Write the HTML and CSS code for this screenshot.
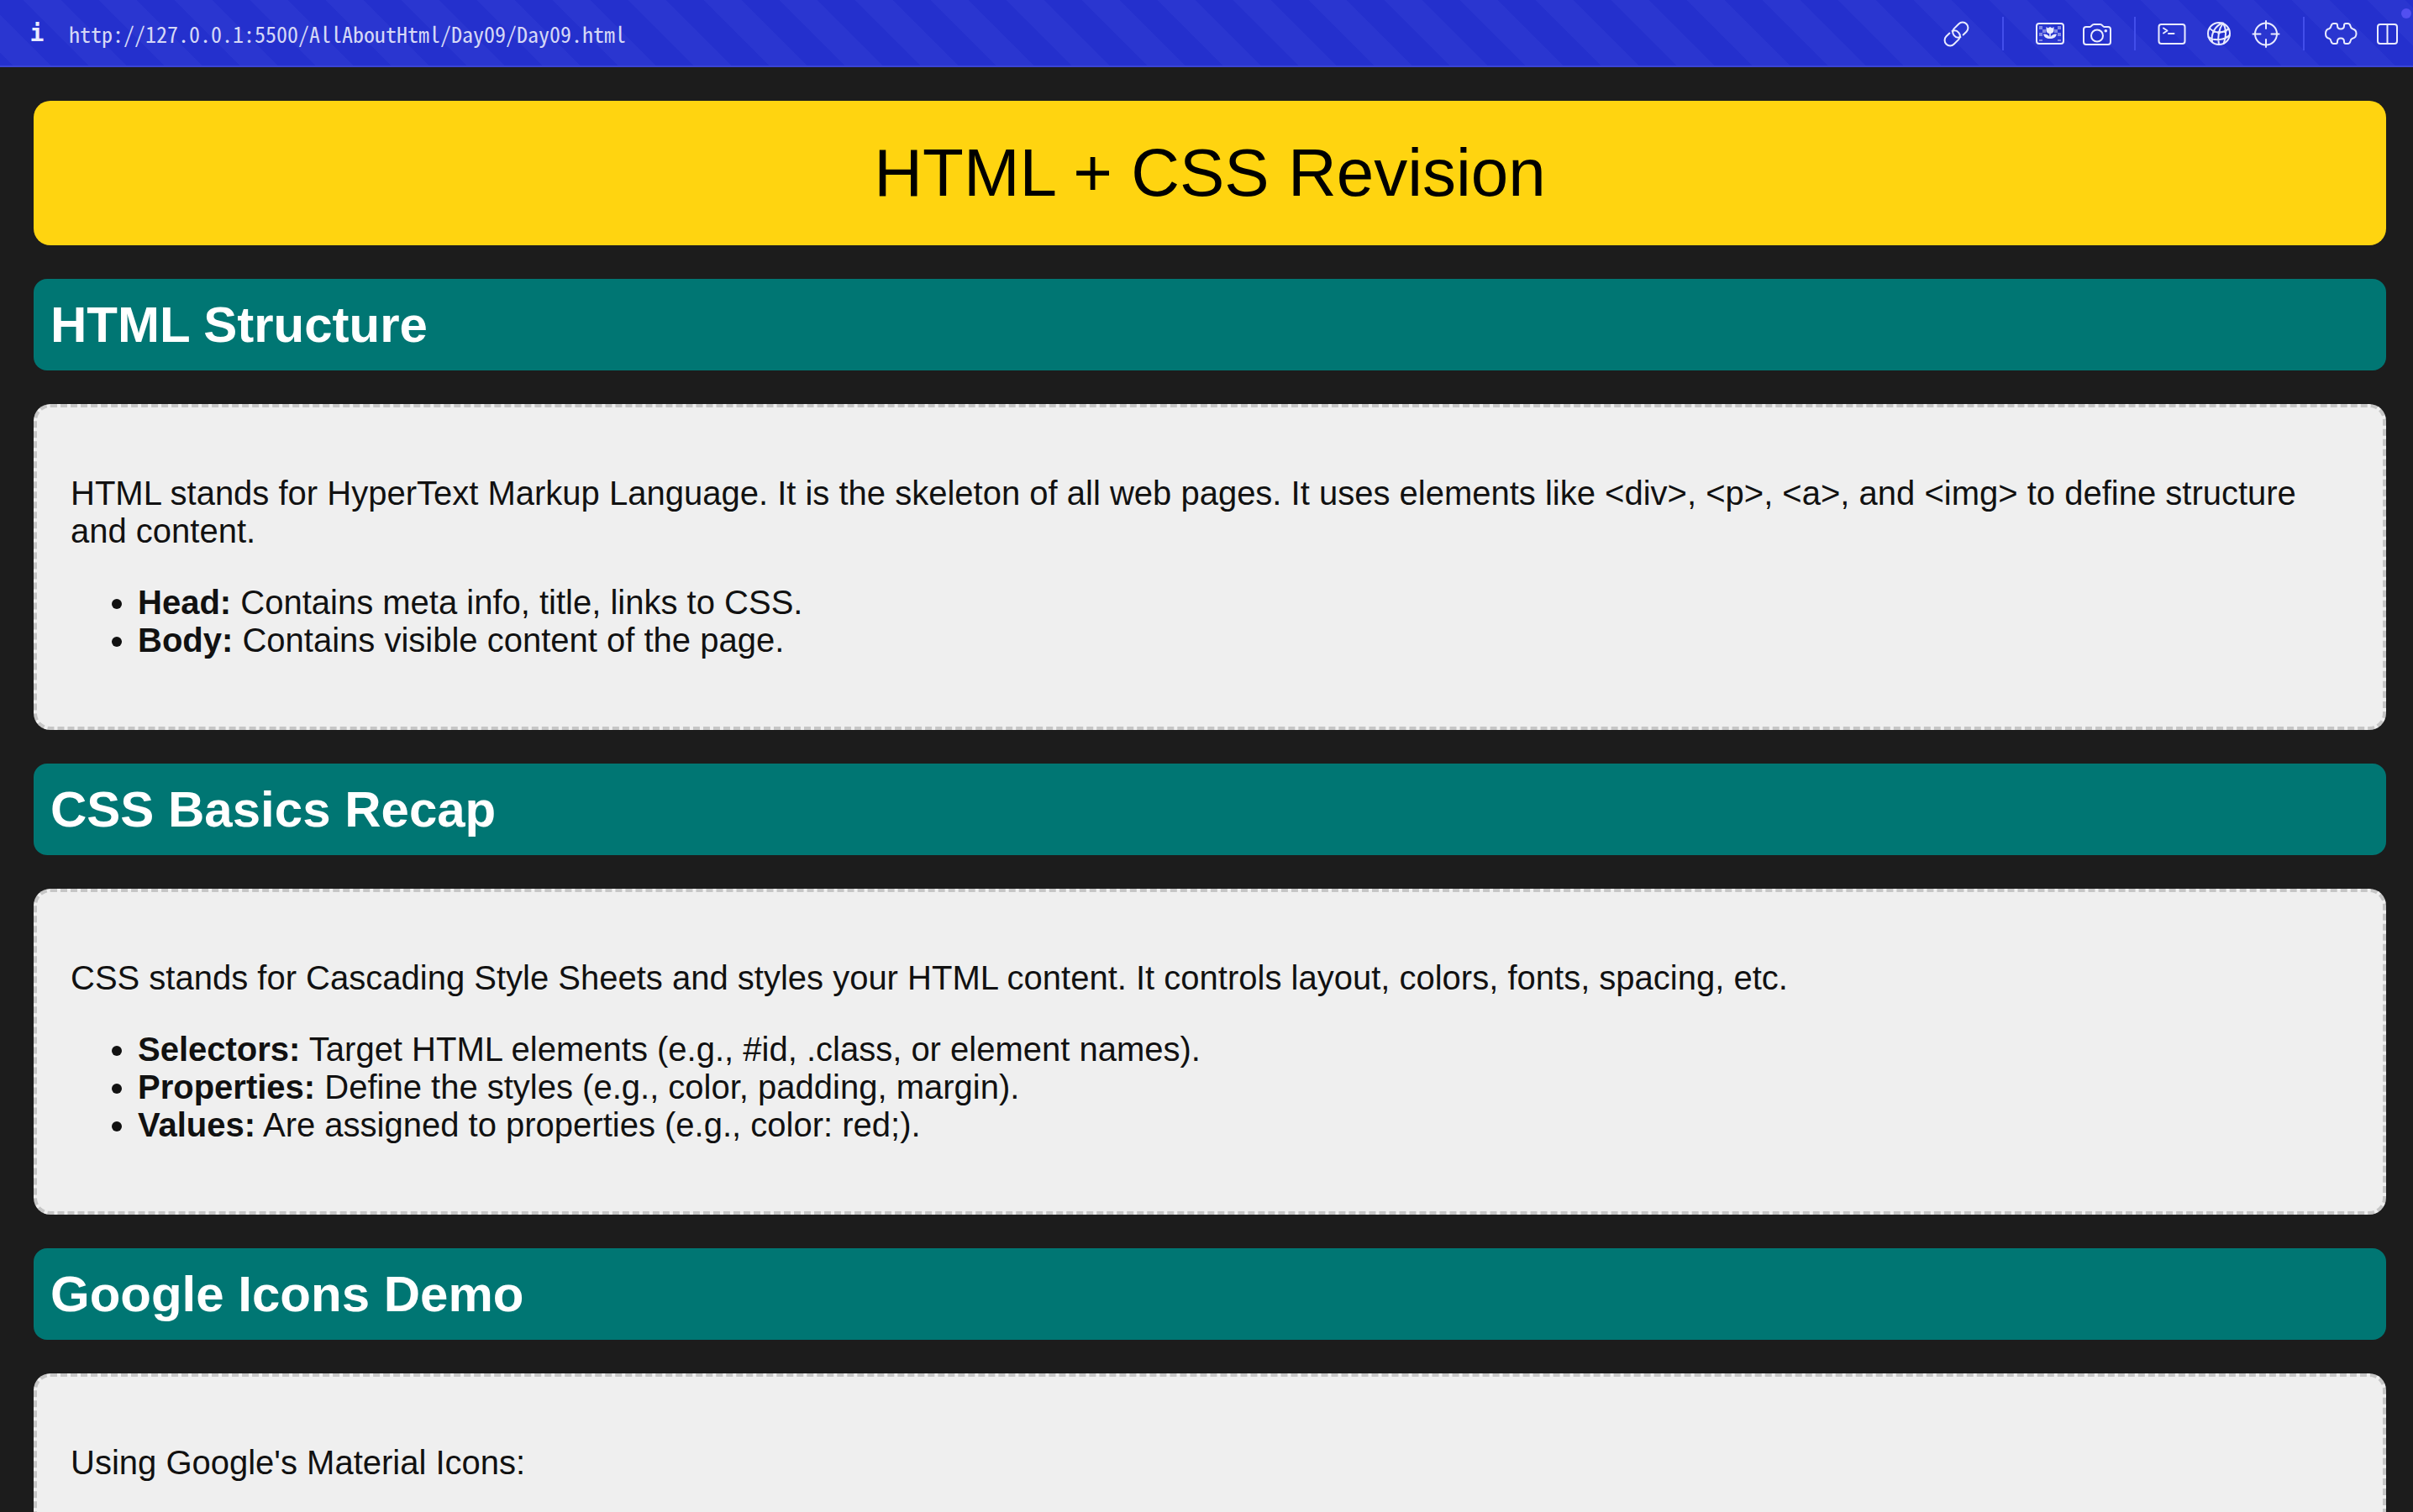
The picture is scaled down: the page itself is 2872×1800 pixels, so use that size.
FILE: index.html
```html
<!DOCTYPE html>
<html lang="en">
<head>
<meta charset="utf-8">
<title>HTML + CSS Revision</title>
<link rel="stylesheet" href="styles.css">
</head>
<body class="window">
<header class="toolbar">
  <button class="info" type="button" aria-label="Site info">i</button>
  <a class="address" href="http://127.0.0.1:5500/AllAboutHtml/Day09/Day09.html">http://127.0.0.1:5500/AllAboutHtml/Day09/Day09.html</a>
  <nav class="tools" aria-label="Developer tools">
    <button class="tool" type="button" aria-label="Copy link">
      <svg class="icon" viewBox="0 0 56 40"><g transform="translate(28.5 20.5) rotate(-45)"><path d="M5 6.500H10.500A6.500 6.500 0 0 0 10.500-6.500H2.500A6.500 6.500 0 0 0 1 6"/><path d="M-5-6.500H-10.500A6.500 6.500 0 0 0-10.500 6.500H-2.500A6.500 6.500 0 0 0-1-6"/></g></svg>
    </button>
    <span class="divider divider-wide"></span>
    <button class="tool" type="button" aria-label="Capture element">
      <svg class="icon" viewBox="0 0 56 40"><rect x="12" y="8" width="32" height="24" rx="3"/><path class="checker" d="M15 11h4v4h-4zM19 15h4v4h-4zM15 19h4v4h-4zM15 27h4v2h-4zM37 11h4v4h-4zM33 15h4v4h-4zM37 19h4v4h-4zM37 27h4v2h-4z"/><path class="solid" d="M23.500 12l2 1.500 2.500-1.500 2.500 1.500 2-1.500v4c0 2.500-1.500 3.500-3.700 4v4c1-2 3-3.500 7-3.500-.5 4-3.500 5.500-7.800 5.500s-7.300-1.500-7.800-5.500c4 0 6 1.500 7 3.500v-4c-2.200-.5-3.700-1.500-3.700-4z"/></svg>
    </button>
    <button class="tool" type="button" aria-label="Capture page">
      <svg class="icon" viewBox="0 0 56 40"><path d="M15 12h4.500c2 0 2-3 5-3h7c3 0 3 3 5 3H41a3 3 0 0 1 3 3v15a3 3 0 0 1-3 3H15a3 3 0 0 1-3-3V15a3 3 0 0 1 3-3z"/><circle cx="28" cy="22.500" r="7"/><circle class="solid" cx="38.300" cy="16.700" r="1.800"/></svg>
    </button>
    <span class="divider"></span>
    <button class="tool" type="button" aria-label="Console">
      <svg class="icon" viewBox="0 0 56 40"><rect x="12.500" y="9" width="31" height="23" rx="3"/><path d="M18 13.500l4.500 3L18 19.500M24 20h6.500"/></svg>
    </button>
    <button class="tool" type="button" aria-label="Network">
      <svg class="icon" viewBox="0 0 56 40"><circle cx="28" cy="20" r="13"/><path d="M32 7.500C25 10 18 19 20 30M33 7.500C28 14 26 24 28 33M33 7.500C37 14 37 24 33.500 32M17 13.500C22 20 34 20 39.500 14M15.500 24C22 29 35 28 40.500 22"/><g class="solid"><circle cx="22" cy="17.500" r="1.800"/><circle cx="28" cy="19" r="1.800"/><circle cx="35.500" cy="17.500" r="1.800"/></g></svg>
    </button>
    <button class="tool" type="button" aria-label="Inspect">
      <svg class="icon" viewBox="0 0 56 40"><circle cx="28" cy="20.500" r="13"/><path d="M28 5v9M28 27v9M12.500 20.500h9M34.500 20.500h9"/></svg>
    </button>
    <span class="divider"></span>
    <button class="tool" type="button" aria-label="Extensions">
      <svg class="icon" viewBox="0 0 56 40"><path d="M19.500 8H22c1.500 0 2 .8 2 2v.5c0 2.500 1.500 4 4 4s4-1.500 4-4V10c0-1.200.5-2 2-2h2.500c1.500 0 2.500 1 3 3 .3 1.800.8 2.700 2.500 3.200 2.500.6 4.500 2.800 4.500 5.800s-2 5.200-4.500 5.800c-1.700.5-2.200 1.400-2.500 3.200-.5 2-1.500 3-3 3H34c-1.500 0-2-.8-2-2v-.5c0-2.500-1.500-4-4-4s-4 1.500-4 4v.5c0 1.200-.5 2-2 2h-2.500c-1.500 0-2.500-1-3-3-.3-1.800-.8-2.700-2.500-3.200C11.500 25.200 10 23 10 20s1.500-5.200 4-5.800c1.700-.5 2.200-1.400 2.500-3.200.5-2 1.500-3 3-3z"/></svg>
    </button>
    <button class="tool" type="button" aria-label="Split view">
      <svg class="icon" viewBox="0 0 56 40"><rect x="16" y="9" width="23" height="23" rx="3"/><path d="M27.500 9v23"/></svg>
      <span class="badge"></span>
    </button>
  </nav>
</header>
<main class="page">
  <h1 class="title">HTML + CSS Revision</h1>

  <h2 class="heading">HTML Structure</h2>
  <section class="card">
    <p class="text">HTML stands for HyperText Markup Language. It is the skeleton of all web pages. It uses elements like &lt;div&gt;, &lt;p&gt;, &lt;a&gt;, and &lt;img&gt; to define structure and content.</p>
    <ul class="list">
      <li><strong>Head:</strong> Contains meta info, title, links to CSS.</li>
      <li><strong>Body:</strong> Contains visible content of the page.</li>
    </ul>
  </section>

  <h2 class="heading">CSS Basics Recap</h2>
  <section class="card">
    <p class="text">CSS stands for Cascading Style Sheets and styles your HTML content. It controls layout, colors, fonts, spacing, etc.</p>
    <ul class="list">
      <li><strong>Selectors:</strong> Target HTML elements (e.g., #id, .class, or element names).</li>
      <li><strong>Properties:</strong> Define the styles (e.g., color, padding, margin).</li>
      <li><strong>Values:</strong> Are assigned to properties (e.g., color: red;).</li>
    </ul>
  </section>

  <h2 class="heading">Google Icons Demo</h2>
  <section class="card">
    <p class="text">Using Google's Material Icons:</p>
  </section>
</main>
</body>
</html>
```
FILE: styles.css
```css
* {
  box-sizing: border-box;
}

.window {
  display: flex;
  flex-direction: column;
  height: 100vh;
  margin: 0;
  overflow: hidden;
  background: #1c1c1c;
  color: #111;
  font-family: "Liberation Sans", Arial, sans-serif;
}

/* Browser toolbar */
.toolbar {
  display: flex;
  flex: none;
  align-items: center;
  height: 80px;
  padding: 2px 2px 0 24px;
  border-bottom: 2px solid #3a44d5;
  background-color: #2430cd;
  background-image: linear-gradient(45deg, #2a36d0 25%, transparent 25% 50%, #2a36d0 50% 75%, transparent 75%);
  background-position: 28px 0;
  background-size: 90px 90px;
}

.info,
.tool {
  padding: 0;
  border: 0;
  background: none;
  color: #e9ebff;
}

.info {
  width: 40px;
  font: bold 28px/40px "DejaVu Sans Mono", monospace;
}

.address {
  margin-left: 18px;
  color: #d5d8f6;
  font: 26px/40px "Noto Sans Mono CJK SC", "Liberation Mono", monospace;
  text-decoration: none;
  white-space: nowrap;
}

.tools {
  display: flex;
  align-items: center;
  margin-left: auto;
}

.tool {
  position: relative;
  width: 56px;
  height: 40px;
}

.icon {
  display: block;
  width: 56px;
  height: 40px;
  fill: none;
  stroke: currentColor;
  stroke-width: 2;
  stroke-linecap: round;
  stroke-linejoin: round;
}

.icon .solid {
  fill: currentColor;
  stroke: none;
}

.icon .checker {
  fill: #8188e4;
  stroke: none;
}

.divider {
  width: 2px;
  height: 40px;
  margin: 0 15px 0 16px;
  background: #424eea;
}

.divider-wide {
  margin: 0 27px;
}

.badge {
  position: absolute;
  top: -10px;
  right: 0;
  width: 12px;
  height: 12px;
  border-radius: 50%;
  background: #524ff0;
}

/* Page content */
.page {
  flex: 1;
  min-height: 0;
  padding: 40px 32px 0 40px;
  overflow: hidden;
}

.title {
  margin: 0;
  padding: 40px;
  border-radius: 20px;
  background: #ffd410;
  color: #000;
  font-size: 80px;
  font-weight: 400;
  line-height: 92px;
  text-align: center;
}

.heading {
  margin: 40px 0;
  padding: 20px;
  border-radius: 16px;
  background: #007673;
  color: #fff;
  font-size: 60px;
  line-height: 69px;
}

.card {
  padding: 40px;
  border: 4px dashed #c6c6c6;
  border-radius: 20px;
  background: #efefef;
  font-size: 40px;
  line-height: 45px;
}

.text,
.list {
  margin: 40px 0;
}

.list {
  padding-left: 80px;
}
```
